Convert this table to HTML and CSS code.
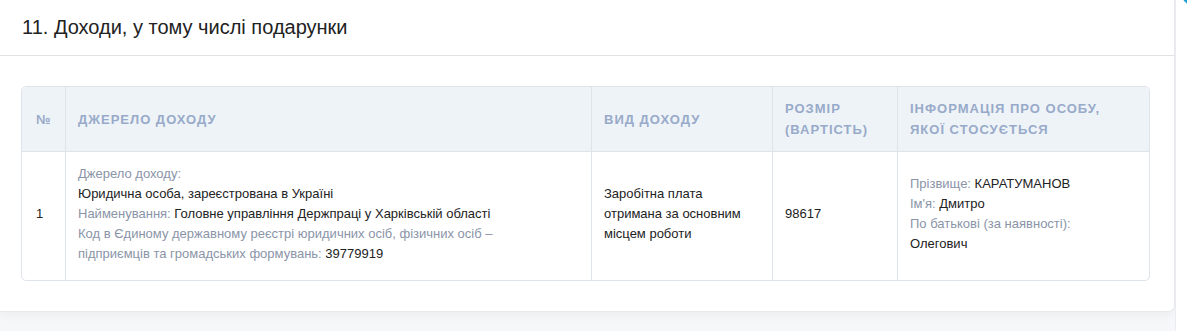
FILE: index.html
```html
<!DOCTYPE html>
<html>
<head>
    <meta charset="UTF-8">
    <title>Доходи</title>
    <link rel="stylesheet" href="styles.css">
</head>
<body>
	<div class="page">
		<div class="card">
			<div class="card-head">
				<h2 class="card-title">11. Доходи, у тому числі подарунки</h2>
			</div>
			<div class="card-body">
				<table class="grid">
					<colgroup>
						<col class="c-num">
						<col class="c-src">
						<col class="c-type">
						<col class="c-size">
						<col class="c-info">
					</colgroup>
					<thead>
						<tr>
							<th class="num">№</th>
							<th>Джерело доходу</th>
							<th>Вид доходу</th>
							<th>Розмір (вартість)</th>
							<th>Інформація про особу, якої стосується</th>
						</tr>
					</thead>
					<tbody>
						<tr>
							<td class="num">1</td>
							<td>
								<div class="lbl">Джерело доходу:</div>
								<div>Юридична особа, зареєстрована в Україні</div>
								<div><span class="lbl">Найменування:</span> Головне управління Держпраці у Харківській області</div>
								<div><span class="lbl">Код в Єдиному державному реєстрі юридичних осіб, фізичних осіб – підприємців та громадських формувань:</span> 39779919</div>
							</td>
							<td>Заробітна плата отримана за основним місцем роботи</td>
							<td>98617</td>
							<td>
								<div><span class="lbl">Прізвище:</span> КАРАТУМАНОВ</div>
								<div><span class="lbl">Ім'я:</span> Дмитро</div>
								<div><span class="lbl">По батькові (за наявності):</span><br>Олегович</div>
							</td>
						</tr>
					</tbody>
				</table>
			</div>
		</div>
		<div class="side"></div>
	</div>
	<span class="to-top"></span>
</body>
</html>
```

FILE: styles.css
```css
*{
	padding: 0;
	margin: 0;
	box-sizing: border-box;
}
body{
	font-family: "Liberation Sans", Arial, sans-serif;
	color: #222;
	background: #f6f7f9;
	overflow: hidden;
}
.page{
	display: flex;
	align-items: flex-start;
}
.card{
	flex: 1;
	background: #fff;
	border-right: 1px solid #e6e8ec;
	border-bottom: 1px solid #e6e8ec;
	border-radius: 0 0 6px 0;
	box-shadow: 0 4px 10px rgba(0, 0, 0, 0.04);
}
.side{
	width: 12px;
	align-self: stretch;
	min-height: 331px;
	background: #fff;
	border-left: 1px solid #ececf0;
}
.card-head{
	height: 56px;
	display: flex;
	align-items: center;
	padding-left: 22px;
	border-bottom: 1px solid #e2e2e2;
}
.card-title{
	font-size: 20px;
	font-weight: normal;
	color: #222;
}
.card-body{
	padding: 30px 24px 30px 21px;
}
.grid{
	width: 100%;
	table-layout: fixed;
	border-collapse: separate;
	border-spacing: 0;
	border: 1px solid #dfe3ea;
	border-radius: 5px;
	font-size: 13px;
	line-height: 20px;
}
.c-num{ width: 43px; }
.c-type{ width: 181px; }
.c-size{ width: 125px; }
.c-info{ width: 252px; }
.grid th{
	background: #eef3f8;
	color: #98aac9;
	text-align: left;
	font-size: 13px;
	font-weight: bold;
	letter-spacing: 1px;
	text-transform: uppercase;
	line-height: 21px;
	padding: 11px 12px;
	vertical-align: middle;
	border-bottom: 1px solid #dfe3ea;
	border-left: 1px solid #dfe3ea;
}
.grid th:first-child{
	border-left: none;
	border-radius: 5px 0 0 0;
}
.grid th:last-child{
	border-radius: 0 5px 0 0;
}
.grid td{
	padding: 12px 26px 16px 12px;
	vertical-align: middle;
	border-left: 1px solid #dfe3ea;
}
.grid td:first-child{
	border-left: none;
}
.grid .num{
	padding-left: 14px;
	padding-right: 4px;
}
.lbl{
	color: #8a94a8;
}
.to-top{
	position: fixed;
	top: -22px;
	right: -22px;
	width: 28px;
	height: 28px;
	border-radius: 50%;
	background: #1c9fd6;
}
```
